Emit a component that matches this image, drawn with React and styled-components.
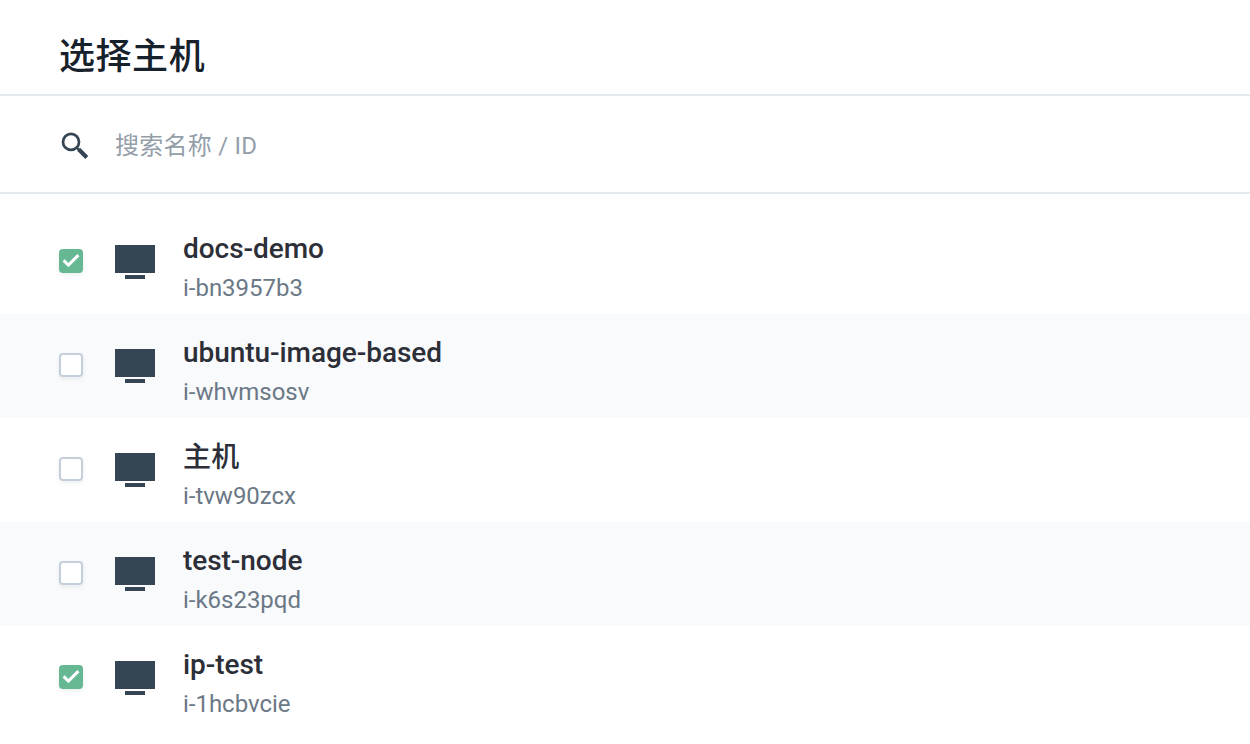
import React from "react";
import styled, { createGlobalStyle } from "styled-components";

const GlobalStyle = createGlobalStyle`
  *, *::before, *::after { box-sizing: border-box; }
  body {
    margin: 0;
    background: #fff;
    font-family: Roboto, "Noto Sans CJK SC", sans-serif;
  }
`;

const Panel = styled.main`
  height: 744px;
  overflow: hidden;
  background: #fff;
`;

const Header = styled.header`
  display: flex;
  align-items: center;
  height: 96px;
  padding: 19px 59px 0;
  border-bottom: 2px solid #e5e9f0;
`;

const Title = styled.h1`
  margin: 0;
  font-size: 36px;
  line-height: 56px;
  font-weight: 500;
  letter-spacing: 0.55px;
  color: #17212b;
`;

const SearchBar = styled.label`
  display: flex;
  align-items: center;
  height: 98px;
  padding: 4px 55px 0;
  gap: 20px;
  border-bottom: 2px solid #e5e9f0;
`;

const SearchInput = styled.input`
  flex: 1;
  height: 40px;
  padding: 0;
  border: 0;
  outline: 0;
  background: transparent;
  font: 400 24px/40px Roboto, "Noto Sans CJK SC", sans-serif;
  letter-spacing: 0.25px;
  color: #324558;
  &::placeholder { color: #939ea9; opacity: 1; }
`;

const List = styled.ul`
  margin: 0;
  padding: 16px 0 0;
  list-style: none;
`;

const Row = styled.li`
  display: flex;
  align-items: center;
  height: 104px;
  padding: 0 59px 2px;
  background: #fff;
  &:nth-child(even) { background: #f9fafc; }
`;

const CheckBox = styled.span`
  display: flex;
  width: 24px;
  height: 24px;
  margin-right: 32px;
  border: ${(p) => (p.$checked ? "0" : "2px solid #c5cfdc")};
  border-radius: 4px;
  background: ${(p) => (p.$checked ? "#65b892" : "#fff")};
  box-shadow: 0 2px 4px rgba(36, 46, 66, 0.08);
`;

const HostIcon = styled.svg`
  width: 40px;
  height: 34px;
  margin: 2px 28px 0 0;
`;

const HostInfo = styled.div`
  display: flex;
  flex-direction: column;
  padding-top: 13px;
`;

const HostName = styled.span`
  font-size: 28px;
  line-height: 40px;
  font-weight: 500;
  letter-spacing: -0.05px;
  color: #2d2f38;
  &:lang(zh) {
    padding-top: 1px;
    margin-bottom: -1px;
    letter-spacing: 0.3px;
  }
`;

const HostId = styled.span`
  font-size: 24px;
  line-height: 38px;
  letter-spacing: -0.02px;
  color: #6b7886;
`;

const hosts = [
  { name: "docs-demo", id: "i-bn3957b3", checked: true },
  { name: "ubuntu-image-based", id: "i-whvmsosv", checked: false },
  { name: "主机", id: "i-tvw90zcx", checked: false, lang: "zh" },
  { name: "test-node", id: "i-k6s23pqd", checked: false },
  { name: "ip-test", id: "i-1hcbvcie", checked: true },
];

export default function App() {
  return (
    <>
      <GlobalStyle />
      <Panel>
        <Header>
          <Title>选择主机</Title>
        </Header>
        <SearchBar>
          <svg width="40" height="40" viewBox="0 0 40 40" fill="none" stroke="#364554">
            <circle cx="16" cy="15.9" r="8" strokeWidth="2.7" />
            <path d="M21.5 21.4L25 24.9" strokeWidth="2.2" />
            <path d="M23.6 23.3L31.8 31.5" strokeWidth="4.2" />
          </svg>
          <SearchInput placeholder="搜索名称 / ID" />
        </SearchBar>
        <List>
          {hosts.map((host) => (
            <Row key={host.id}>
              <CheckBox $checked={host.checked}>
                {host.checked && (
                  <svg width="24" height="24" viewBox="0 0 24 24" fill="none">
                    <path d="M4.6 11.4L9.4 16.1L19.4 6.1" stroke="#fff" strokeWidth="3" />
                  </svg>
                )}
              </CheckBox>
              <HostIcon viewBox="0 0 40 34" fill="#364554">
                <rect width="40" height="28" />
                <rect x="10" y="30" width="20" height="4" />
              </HostIcon>
              <HostInfo>
                <HostName lang={host.lang}>{host.name}</HostName>
                <HostId>{host.id}</HostId>
              </HostInfo>
            </Row>
          ))}
        </List>
      </Panel>
    </>
  );
}
